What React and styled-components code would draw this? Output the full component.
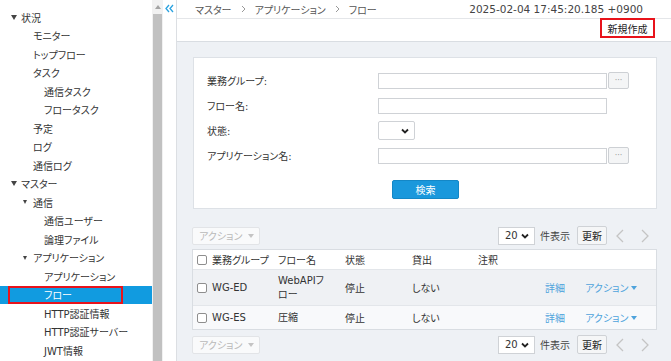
import styled, { createGlobalStyle } from 'styled-components';

const GlobalStyle = createGlobalStyle`
  html, body {
    margin: 0;
    padding: 0;
    overflow: hidden;
  }
  body {
    font-family: "DejaVu Sans", "Noto Sans CJK JP", sans-serif;
    font-size: 10px;
    font-feature-settings: "palt";
    color: #333;
    background: #fff;
  }
`;

const menu = [
  { label: '状況', indent: 11, toggle: 'big' },
  { label: 'モニター', indent: 33 },
  { label: 'トップフロー', indent: 33 },
  { label: 'タスク', indent: 33 },
  { label: '通信タスク', indent: 44 },
  { label: 'フロータスク', indent: 44 },
  { label: '予定', indent: 33 },
  { label: 'ログ', indent: 33 },
  { label: '通信ログ', indent: 33 },
  { label: 'マスター', indent: 11, toggle: 'big' },
  { label: '通信', indent: 23, toggle: 'small' },
  { label: '通信ユーザー', indent: 44 },
  { label: '論理ファイル', indent: 44 },
  { label: 'アプリケーション', indent: 23, toggle: 'small' },
  { label: 'アプリケーション', indent: 44 },
  { label: 'フロー', indent: 8, active: true },
  { label: 'HTTP認証情報', indent: 44 },
  { label: 'HTTP認証サーバー', indent: 44 },
  { label: 'JWT情報', indent: 44 },
];

const rows = [
  { group: 'WG-ED', name: 'WebAPIフロー', state: '停止', lend: 'しない', tone: 'dark', tall: true },
  { group: 'WG-ES', name: '圧縮', state: '停止', lend: 'しない', tone: 'light' },
];

const Chevron = () => (
  <svg width="5" height="8" viewBox="0 0 5 8">
    <polyline points="1,1 4,4 1,7" fill="none" stroke="#999" strokeWidth="1" />
  </svg>
);

const SelectArrow = () => (
  <svg width="8" height="6" viewBox="0 0 8 6">
    <polyline points="1,1.5 4,4.5 7,1.5" fill="none" stroke="#222" strokeWidth="1.8" />
  </svg>
);

const Pager = () => (
  <PagerGroup>
    <SmallSelect>20<SelectArrow /></SmallSelect>
    <span>件表示</span>
    <RefreshButton>更新</RefreshButton>
    <PageArrows>
      <svg width="10" height="14" viewBox="0 0 10 14">
        <polyline points="8,1 2,7 8,13" fill="none" stroke="#c4c4c4" strokeWidth="1.3" />
      </svg>
      <svg width="10" height="14" viewBox="0 0 10 14">
        <polyline points="2,1 8,7 2,13" fill="none" stroke="#c4c4c4" strokeWidth="1.3" />
      </svg>
    </PageArrows>
  </PagerGroup>
);

const ListToolbar = ({ bottom }) => (
  <Toolbar $bottom={bottom}>
    <DisabledAction>アクション<Caret $color="#c4c4c4" /></DisabledAction>
    <Pager />
  </Toolbar>
);

export default function App() {
  return (
    <Page>
      <GlobalStyle />
      <Sidebar>
        {menu.map((m, i) => (
          <TreeRow key={i} $indent={m.indent} $active={m.active}>
            {m.toggle && <Toggle $small={m.toggle === 'small'} />}
            {m.active ? <Marked>{m.label}</Marked> : m.label}
          </TreeRow>
        ))}
      </Sidebar>
      <ScrollTrack>
        <ScrollArrow>
          <svg width="6" height="4" viewBox="0 0 6 4"><polygon points="0,4 3,0 6,4" fill="#a3a3a3" /></svg>
        </ScrollArrow>
        <ScrollThumb />
      </ScrollTrack>
      <CollapseStrip>
        <svg width="9" height="9" viewBox="0 0 9 9">
          <polyline points="4,1 1,4.5 4,8" fill="none" stroke="#2aa2e0" strokeWidth="1.3" />
          <polyline points="8,1 5,4.5 8,8" fill="none" stroke="#2aa2e0" strokeWidth="1.3" />
        </svg>
      </CollapseStrip>
      <Main>
        <TopBar>
          <Crumbs>
            <span>マスター</span>
            <Chevron />
            <span>アプリケーション</span>
            <Chevron />
            <span>フロー</span>
          </Crumbs>
          <Stamp>2025-02-04 17:45:20.185 +0900</Stamp>
        </TopBar>
        <ActionBar>
          <NewButton>新規作成</NewButton>
        </ActionBar>
        <Content>
          <SearchCard>
            <FormGrid>
              <Label>業務グループ:</Label>
              <Field><TextInput /><DotsButton>···</DotsButton></Field>
              <Label>フロー名:</Label>
              <Field><TextInput /></Field>
              <Label>状態:</Label>
              <Field><StateSelect><SelectArrow /></StateSelect></Field>
              <Label>アプリケーション名:</Label>
              <Field><TextInput /><DotsButton>···</DotsButton></Field>
            </FormGrid>
            <SearchFooter>
              <SearchButton>検索</SearchButton>
            </SearchFooter>
          </SearchCard>

          <ListToolbar />

          <Table>
            <TableRow $tone="head">
              <CheckCell><Check />業務グループ</CheckCell>
              <Cell>フロー名</Cell>
              <Cell>状態</Cell>
              <Cell>貸出</Cell>
              <Cell>注釈</Cell>
              <Cell />
              <Cell />
            </TableRow>
            {rows.map((r) => (
              <TableRow key={r.group} $tone={r.tone} $tall={r.tall}>
                <CheckCell><Check />{r.group}</CheckCell>
                <NameCell>{r.name}</NameCell>
                <Cell>{r.state}</Cell>
                <Cell>{r.lend}</Cell>
                <Cell />
                <LinkCell>詳細</LinkCell>
                <LinkCell>アクション<Caret $color="#4ea3dc" /></LinkCell>
              </TableRow>
            ))}
          </Table>

          <ListToolbar bottom />
        </Content>
      </Main>
    </Page>
  );
}

const Page = styled.div`
  display: flex;
  height: 100vh;
  width: 100vw;
`;

const Sidebar = styled.nav`
  width: 152px;
  flex-shrink: 0;
  padding-top: 8px;
  background: #fff;
  overflow: hidden;
`;

const TreeRow = styled.div`
  display: flex;
  align-items: center;
  height: 18.5px;
  padding-left: ${(p) => p.$indent}px;
  background: ${(p) => (p.$active ? '#119be0' : 'transparent')};
  color: ${(p) => (p.$active ? '#fff' : '#333')};
  white-space: nowrap;
`;

const Toggle = styled.span`
  width: 0;
  height: 0;
  border-left: ${(p) => (p.$small ? 2.5 : 3)}px solid transparent;
  border-right: ${(p) => (p.$small ? 2.5 : 3)}px solid transparent;
  border-top: ${(p) => (p.$small ? 4 : 5)}px solid #444;
  margin-right: ${(p) => (p.$small ? 6 : 4)}px;
`;

const Marked = styled.span`
  box-sizing: border-box;
  display: flex;
  align-items: center;
  width: 115px;
  height: 18.5px;
  padding-left: 34px;
  border: 2px solid #e8131b;
`;

const ScrollTrack = styled.div`
  width: 11px;
  flex-shrink: 0;
  display: flex;
  flex-direction: column;
  background: #f1f1f1;
`;

const ScrollArrow = styled.div`
  height: 14px;
  display: flex;
  align-items: center;
  justify-content: center;
`;

const ScrollThumb = styled.div`
  flex: 1;
  margin: 0 1px;
  background: #c1c1c1;
`;

const CollapseStrip = styled.div`
  width: 13px;
  flex-shrink: 0;
  display: flex;
  justify-content: center;
  padding-top: 4px;
  border-right: 1px solid #dcdfe3;
  background: #fff;
`;

const Main = styled.main`
  flex: 1;
  display: flex;
  flex-direction: column;
  min-width: 0;
`;

const TopBar = styled.header`
  display: flex;
  align-items: center;
  justify-content: space-between;
  height: 18px;
  padding: 0 28px 0 18px;
  border-bottom: 1px solid #e4e6e9;
  color: #555;
`;

const Crumbs = styled.div`
  display: flex;
  align-items: center;
  gap: 9px;
`;

const Stamp = styled.span`
  color: #444;
  font-size: 10.5px;
`;

const ActionBar = styled.div`
  display: flex;
  justify-content: flex-end;
  align-items: flex-start;
  height: 22px;
  padding-right: 16px;
  border-bottom: 1px solid #d9dde2;
`;

const NewButton = styled.div`
  box-sizing: border-box;
  display: flex;
  align-items: center;
  justify-content: center;
  width: 55px;
  height: 20px;
  margin-top: -1px;
  border: 2px solid #e8131b;
  color: #222;
  background: #fff;
`;

const Content = styled.section`
  flex: 1;
  background: #eef1f5;
  padding: 15px 14px 0 15px;
`;

const SearchCard = styled.div`
  box-sizing: border-box;
  height: 152px;
  margin-left: 1px;
  padding: 10px 12px 0 13px;
  background: #fff;
  border: 1px solid #dde1e6;
`;

const FormGrid = styled.div`
  display: grid;
  grid-template-columns: 171px auto;
  grid-auto-rows: 25px;
  align-items: center;
`;

const Label = styled.div`
  color: #333;
`;

const Field = styled.div`
  display: flex;
  align-items: center;
`;

const TextInput = styled.div`
  box-sizing: border-box;
  width: 229px;
  height: 16px;
  background: #fff;
  border: 1px solid #cfd2d6;
`;

const DotsButton = styled.div`
  box-sizing: border-box;
  display: flex;
  align-items: center;
  justify-content: center;
  width: 21px;
  height: 17px;
  margin-left: 1px;
  background: #f4f5f6;
  border: 1px solid #cdd0d4;
  border-radius: 2px;
  color: #999;
  font-size: 8px;
`;

const StateSelect = styled.div`
  box-sizing: border-box;
  display: flex;
  align-items: center;
  justify-content: flex-end;
  width: 37px;
  height: 19px;
  padding-right: 5px;
  background: #fff;
  border: 1px solid #cfd2d6;
  border-radius: 2px;
`;

const SearchFooter = styled.div`
  display: flex;
  justify-content: center;
  margin-top: 12px;
`;

const SearchButton = styled.div`
  box-sizing: border-box;
  display: flex;
  align-items: center;
  justify-content: center;
  width: 67px;
  height: 19px;
  background: #1a98dc;
  border: 1px solid #1487c6;
  border-radius: 2px;
  color: #fff;
`;

const Toolbar = styled.div`
  display: flex;
  align-items: center;
  justify-content: space-between;
  height: 19px;
  margin: ${(p) => (p.$bottom ? '5px 0 0' : '17px 0 4px')};
`;

const DisabledAction = styled.div`
  box-sizing: border-box;
  display: flex;
  align-items: center;
  gap: 3px;
  width: 68px;
  height: 18px;
  padding-left: 6px;
  background: #f9fafb;
  border: 1px solid #e2e4e7;
  border-radius: 2px;
  color: #b9b9b9;
`;

const Caret = styled.span`
  width: 0;
  height: 0;
  border-left: 3px solid transparent;
  border-right: 3px solid transparent;
  border-top: 4px solid ${(p) => p.$color};
  margin-left: 3px;
`;

const PagerGroup = styled.div`
  display: flex;
  align-items: center;
  gap: 5px;
  color: #444;
`;

const SmallSelect = styled.div`
  box-sizing: border-box;
  display: flex;
  align-items: center;
  justify-content: space-between;
  width: 37px;
  height: 18px;
  padding: 0 5px 0 6px;
  background: #fff;
  border: 1px solid #cfd2d6;
  color: #333;
`;

const RefreshButton = styled.div`
  box-sizing: border-box;
  display: flex;
  align-items: center;
  justify-content: center;
  width: 30px;
  height: 19px;
  margin-left: 2px;
  background: #f5f6f7;
  border: 1px solid #cfd2d6;
  border-radius: 2px;
  color: #222;
`;

const PageArrows = styled.div`
  display: flex;
  align-items: center;
  gap: 15px;
  margin: 0 7px 0 3px;
`;

const Table = styled.div`
  border: 1px solid #d9dde2;
  background: #fff;
`;

const TableRow = styled.div`
  display: grid;
  grid-template-columns: 82px 67px 67px 66px 67px 40px 1fr;
  align-items: center;
  height: ${(p) => (p.$tone === 'head' ? 19 : p.$tall ? 35 : 23)}px;
  background: ${(p) => ({ head: '#fff', dark: '#eff1f4', light: '#f8f9fb' }[p.$tone])};
  border-top: ${(p) => (p.$tone === 'head' ? 'none' : '1px solid #e3e6ea')};
  color: #333;
`;

const Cell = styled.div`
  padding-left: 3px;
  white-space: nowrap;
`;

const NameCell = styled.div`
  padding: 0 9px 0 3px;
  line-height: 14px;
`;

const CheckCell = styled.div`
  display: flex;
  align-items: center;
  gap: 5px;
  padding-left: 4px;
  white-space: nowrap;
`;

const Check = styled.span`
  box-sizing: border-box;
  width: 10px;
  height: 10px;
  background: #fff;
  border: 1px solid #8e8e8e;
  border-radius: 2px;
`;

const LinkCell = styled.div`
  display: flex;
  align-items: center;
  padding-left: 3px;
  color: #4ea3dc;
  white-space: nowrap;
`;
